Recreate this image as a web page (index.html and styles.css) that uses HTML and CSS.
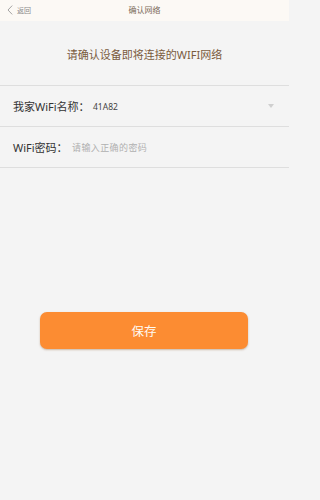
FILE: index.html
```html
<!DOCTYPE html>
<html lang="zh">
<head>
<meta charset="utf-8">
<link rel="stylesheet" href="styles.css">
</head>
<body>
<div class="page">
  <header class="topbar">
    <div class="back">
      <svg class="chev" width="6" height="10" viewBox="0 0 6 10"><path d="M5.2 0.6 L1 5 L5.2 9.4" fill="none" stroke="#9a9a9a" stroke-width="0.9"/></svg>
      <span>返回</span>
    </div>
    <div class="title">确认网络</div>
  </header>
  <div class="heading">请确认设备即将连接的WIFI网络</div>
  <div class="form">
    <div class="row">
      <span class="label">我家WiFi名称：</span>
      <span class="value">41A82</span>
      <span class="caret"></span>
    </div>
    <div class="row">
      <span class="label">WiFi密码：</span>
      <span class="placeholder">请输入正确的密码</span>
    </div>
  </div>
  <div class="actions">
    <button class="save">保存</button>
  </div>
</div>
</body>
</html>
```
FILE: styles.css
```css
* { box-sizing: border-box; }
html, body { margin: 0; padding: 0; }
html { background: #f4f4f4; }
body {
  background: #f4f4f4;
  font-family: "Noto Sans", "Noto Sans CJK SC", sans-serif;
}
.page {
  width: 289px;
  height: 500px;
  overflow: hidden;
}
.topbar {
  height: 21px;
  background: #fcf9f5;
  display: flex;
  align-items: center;
  justify-content: center;
  position: relative;
}
.back {
  position: absolute;
  left: 7px;
  top: 0;
  height: 20px;
  display: flex;
  align-items: center;
  gap: 4px;
  font-size: 7px;
  color: #8a8a8a;
  font-family: "Noto Sans CJK SC", sans-serif;
}
.chev { display: block; }
.title {
  font-size: 8px;
  color: #7b6a58;
  font-family: "Noto Sans CJK SC", sans-serif;
  margin-top: -2px;
}
.heading {
  height: 64px;
  display: flex;
  align-items: center;
  justify-content: center;
  font-size: 11px;
  color: #7a5b3d;
  padding-top: 2px;
}
.form {
  border-bottom: 1px solid #dedede;
}
.row {
  height: 41px;
  border-top: 1px solid #dedede;
  display: flex;
  align-items: center;
  padding: 0 12px 0 13px;
}
.label {
  font-size: 11px;
  color: #333333;
  width: 80px;
  flex: none;
  white-space: nowrap;
}
.row:nth-child(2) .label { width: 59px; }
.value {
  font-size: 8.5px;
  color: #444444;
  flex: 1;
}
.placeholder {
  font-size: 9px;
  color: #b0b0b0;
  flex: 1;
  letter-spacing: 0.4px;
}
.caret {
  width: 0;
  height: 0;
  border-left: 3px solid transparent;
  border-right: 3px solid transparent;
  border-top: 4px solid #cfcfcf;
  margin-right: 3px;
}
.actions {
  padding-top: 144px;
  padding-left: 40px;
}
.save {
  width: 208px;
  height: 37px;
  border: none;
  border-radius: 7px;
  background: #fc8c32;
  color: #fffaf2;
  font-size: 12.5px;
  font-family: "Noto Sans CJK SC", sans-serif;
  box-shadow: 0 1px 2px rgba(120, 70, 20, 0.35);
  padding: 0;
}
```
